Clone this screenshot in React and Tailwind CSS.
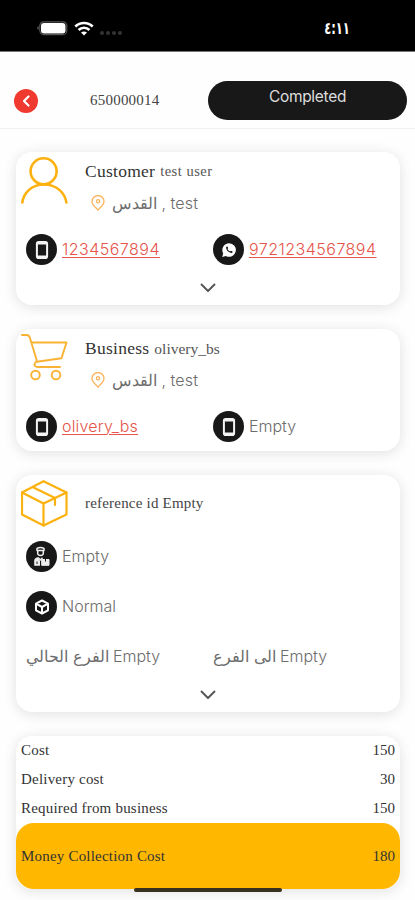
const serif = "font-['Liberation_Serif',serif]";
const shadow = 'shadow-[0_2px_14px_rgba(0,0,0,0.12)]';

const UserIcon = () => (
  <svg className="h-[47px] w-[47px]" viewBox="0 0 47 47" fill="none" stroke="#fdb10f" strokeWidth="2.600">
    <circle cx="22.600" cy="14.300" r="13" />
    <path d="M1.200 46.500C2.200 35.500 11 27.500 23 27.500S44.500 35.500 45.500 46.500" />
  </svg>
);

const CartIcon = () => (
  <svg className="h-[47px] w-[47px]" viewBox="0 0 47 47" fill="none" stroke="#f9b233" strokeWidth="1.900" strokeLinejoin="round" strokeLinecap="round">
    <path d="M0.800 1H5.500Q8 1 8.800 3.500L15.500 25.500Q16 27.500 14.300 28.800C12.500 31 14 33 17 33H39" />
    <path d="M10.800 8.500H45.500L40.500 24.300L16 27.700" />
    <circle cx="14.500" cy="41" r="4.300" />
    <circle cx="35" cy="41" r="4.300" />
  </svg>
);

const BoxIcon = () => (
  <svg className="h-[47px] w-[47px]" viewBox="0 0 47 47" fill="none" stroke="#fdb10f" strokeWidth="2.200" strokeLinejoin="round" strokeLinecap="round">
    <path d="M22.500 1.200L45.500 12.500V34.500L22.500 45.500L1 34.500V12.500Z" />
    <path d="M1 12.500L22.500 23.500L45.500 12.500M22.500 23.500V45.500" />
    <path d="M12 7.200L34 18V25" />
  </svg>
);

const PinIcon = () => (
  <svg className="h-4 w-[14px] shrink-0" viewBox="0 0 14 16" fill="none" stroke="#fbb45c" strokeWidth="1.300" strokeLinejoin="round">
    <path d="M7 15.200C5.500 12.500 1 10.500 1 6.500A6 5.900 0 0 1 13 6.500C13 10.500 8.500 12.500 7 15.200Z" />
    <circle cx="7" cy="6.300" r="1.600" />
  </svg>
);

const PhoneIcon = () => (
  <svg className="h-5 w-[14px]" viewBox="0 0 14 20" fill="none" stroke="#f4f4f4">
    <rect x="1.900" y="1.900" width="10.200" height="16.200" rx="1.800" strokeWidth="2" />
    <path d="M2.500 3.400H11.500M2.500 16.600H11.500" strokeWidth="2" />
  </svg>
);

const WhatsappIcon = () => (
  <svg className="h-4 w-4" viewBox="0 0 16 16">
    <path d="M8 1.200A6.800 6.800 0 1 1 4.900 14L1.200 14.900L2.200 11.400A6.800 6.800 0 0 1 8 1.200Z" fill="white" />
    <path d="M5.200 4.800C4.600 7.800 7.800 11.200 11.200 10.900L11.600 9.600L9.900 8.800L9.100 9.600Q7.300 8.800 6.500 7L7.200 6.200L6.500 4.600Z" fill="#181818" />
  </svg>
);

const CourierIcon = () => (
  <svg className="h-[21px] w-[18px]" viewBox="0 0 18 21" fill="none" stroke="#eee" strokeWidth="1.500" strokeLinejoin="round">
    <path d="M4 4.500V2.300Q7.500 0.500 11 2.300V4.500Z" />
    <path d="M4.700 5V7.500Q5 9.500 7.500 9.500T10.300 7.500V5" />
    <path d="M5 11.500L7.500 14L9.500 11.800" />
    <path d="M1.200 19.700V15Q1.200 12 4.600 11.300L7 14.500V19.700Z" fill="#eee" stroke="none" />
    <path d="M4 15.500V18" stroke="#181818" strokeWidth="1" />
    <path d="M8.700 13.500H16V19.300H8.700Z" fill="#eee" strokeWidth="1" />
    <path d="M12.500 13V15.500" stroke="#181818" strokeWidth="1" />
  </svg>
);

const CubeIcon = () => (
  <svg className="h-4 w-4" viewBox="0 0 16 16" fill="#181818" stroke="white" strokeWidth="2" strokeLinejoin="round">
    <path d="M8 1.500L14 4.700V11.300L8 14.500L2 11.300V4.700Z" />
    <path d="M2 4.700L8 8L14 4.700M8 8V14.500" />
  </svg>
);

const ChevronDown = () => (
  <svg className="h-[10px] w-4" viewBox="0 0 16 10" fill="none" stroke="#555" strokeWidth="1.900" strokeLinecap="round" strokeLinejoin="round">
    <path d="M1.500 1.500L8 8L14.500 1.500" />
  </svg>
);

const StatusBar = () => (
  <div className="flex h-[52px] items-start justify-between border-b border-[#777] bg-black pl-9 pr-[65px] text-white">
    <div className="mt-5 flex items-center">
      <svg className="h-4 w-[32px]" viewBox="0 0 32 16">
        <path d="M2.500 6Q0 8 2.500 10Z" fill="#777" />
        <rect x="3.800" y="1.800" width="27" height="12.800" rx="4" fill="none" stroke="#555" strokeWidth="1.200" />
        <rect x="5" y="3" width="24.500" height="10.500" rx="3" fill="white" />
      </svg>
      <svg className="ml-[6px] h-[15px] w-5" viewBox="0 0 20 15" fill="none" stroke="white" strokeWidth="2.700">
        <path d="M1.300 5.500C6.200 0.800 13.800 0.800 18.700 5.500" />
        <path d="M4.600 9C7.700 6 12.300 6 15.400 9" />
        <path d="M10 14.500L7 11.600Q10 9.300 13 11.600Z" fill="white" stroke="none" />
      </svg>
      <div className="ml-[6px] mt-[9px] flex gap-[2px]">
        <span className="h-1 w-1 rounded-full bg-[#333]" />
        <span className="h-1 w-1 rounded-full bg-[#333]" />
        <span className="h-1 w-1 rounded-full bg-[#333]" />
        <span className="h-1 w-1 rounded-full bg-[#333]" />
      </div>
    </div>
    <span className="mt-[18px] origin-right scale-x-[0.680] font-['DejaVu_Sans',sans-serif] text-[17px] font-bold leading-5">٤:١١</span>
  </div>
);

const Header = () => (
  <header className="flex h-[77px] items-start border-b border-[#f1f1f1] pl-[14px] pr-2 pt-7">
    <button className="mt-[9px] flex h-6 w-6 items-center justify-center rounded-full bg-[#f03a30]">
      <svg className="h-3 w-2" viewBox="0 0 8 12" fill="none" stroke="white" strokeWidth="2.200" strokeLinecap="round" strokeLinejoin="round">
        <path d="M6.500 1.500L2 6L6.500 10.500" />
      </svg>
    </button>
    <span className={`ml-[52px] mt-[10px] w-[118px] text-[15px] leading-5 tracking-[0.220px] text-[#444] ${serif}`}>650000014</span>
    <div className="mt-[1px] flex h-[39px] flex-1 justify-center rounded-full bg-[#181818] pt-[6px] text-[15.500px] font-normal leading-5 tracking-[-0.300px] text-[#ddd]">
      Completed
    </div>
  </header>
);

const IconText = ({ icon, link, children }) => (
  <div className="flex items-center gap-[5px]">
    <span className="flex h-[31px] w-[31px] shrink-0 items-center justify-center rounded-full bg-[#181818]">{icon}</span>
    <span className={link ? '-mt-[2px] text-[#e5534b] underline decoration-1 underline-offset-2' : '-mt-[2px] text-[#6c6c6c]'}>{children}</span>
  </div>
);

const PartyTitle = ({ icon, label, name }) => (
  <div className="flex pl-[5px]">
    {icon}
    <div className="ml-[17px]">
      <p className={`flex h-[29px] items-center gap-[5px] text-[#555] ${serif}`}>
        <span className="text-[17.500px] tracking-[0.260px] text-[#333]">{label}</span>
        {name}
      </p>
      <div className="ml-[6px] flex h-[33px] items-center gap-[7px]">
        <PinIcon />
        <span className="tracking-[0.200px] text-[#6c6c6c]">القدس , test</span>
      </div>
    </div>
  </div>
);

const costs = [
  ['Cost', '150'],
  ['Delivery cost', '30'],
  ['Required from business', '150'],
];

export default function App() {
  return (
    <div className="relative h-[900px] w-full overflow-hidden bg-[#fefefe] font-['Inter','Noto_Sans',sans-serif] text-base font-light">
      <StatusBar />
      <Header />
      <main className="flex flex-col gap-6 pl-4 pr-[15px] pt-[23px]">
        <section className={`h-[153px] rounded-2xl bg-white pt-[5px] ${shadow}`}>
          <PartyTitle icon={<UserIcon />} label="Customer" name={<span className="text-[14.500px] tracking-[0.500px]">test user</span>} />
          <div className="mt-[15px] grid grid-cols-[187px_1fr] pl-[10px]">
            <IconText icon={<PhoneIcon />} link><span className="tracking-[0.480px]">1234567894</span></IconText>
            <IconText icon={<WhatsappIcon />} link><span className="tracking-[0.480px]">9721234567894</span></IconText>
          </div>
          <div className="mt-[18px] flex justify-center"><ChevronDown /></div>
        </section>

        <section className={`h-[122px] rounded-2xl bg-white pt-[5px] ${shadow}`}>
          <PartyTitle icon={<CartIcon />} label="Business" name={<span className="text-[15.500px]">olivery_bs</span>} />
          <div className="mt-[15px] grid grid-cols-[187px_1fr] pl-[10px]">
            <IconText icon={<PhoneIcon />} link><span className="tracking-[0.200px]">olivery_bs</span></IconText>
            <IconText icon={<PhoneIcon />}>Empty</IconText>
          </div>
        </section>

        <section className={`h-[237px] rounded-2xl bg-white pt-[5px] ${shadow}`}>
          <div className="flex items-center pl-[5px]">
            <BoxIcon />
            <p className={`ml-[17px] text-[15px] tracking-[0.200px] text-[#444] ${serif}`}>reference id Empty</p>
          </div>
          <div className="mt-[14px] flex flex-col gap-[19px] pl-[10px]">
            <IconText icon={<CourierIcon />}>Empty</IconText>
            <IconText icon={<CubeIcon />}>Normal</IconText>
          </div>
          <div className="mt-[22px] grid grid-cols-[187px_1fr] pl-[10px] text-[#6c6c6c]">
            <span>الفرع الحالي Empty</span>
            <span>الى الفرع Empty</span>
          </div>
          <div className="mt-[22px] flex justify-center"><ChevronDown /></div>
        </section>

        <section className={`h-[153px] rounded-2xl bg-white text-[15px] text-[#333] ${serif} ${shadow}`}>
          {costs.map(([label, value]) => (
            <div key={label} className="flex h-[29px] items-center justify-between px-[5px]">
              <span className="tracking-[0.200px]">{label}</span>
              <span>{value}</span>
            </div>
          ))}
          <div className="flex h-[66px] items-center justify-between rounded-[18px] bg-[#ffb700] px-[5px]">
            <span className="tracking-[0.200px]">Money Collection Cost</span>
            <span>180</span>
          </div>
        </section>
      </main>
      {/* home indicator */}
      <div className="absolute left-[134px] top-[888px] h-1 w-[148px] rounded-full bg-[#3a3020]" />
    </div>
  );
}
